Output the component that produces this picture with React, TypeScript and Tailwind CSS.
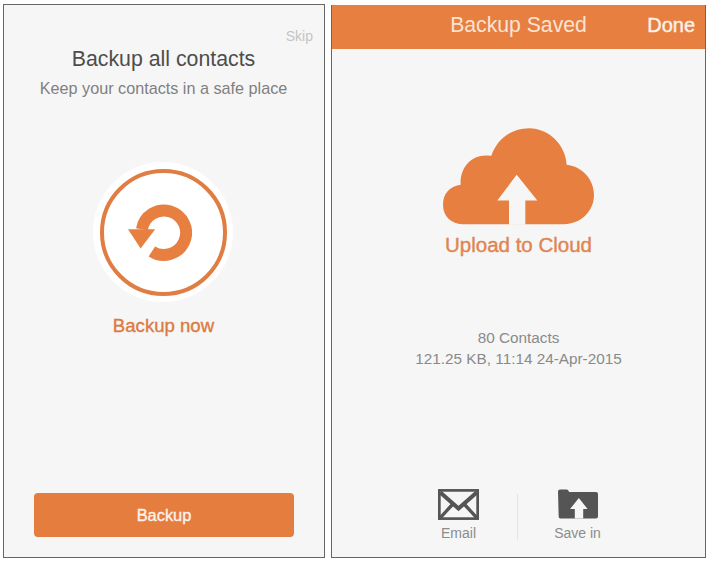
// App.tsx
import React from 'react';

const ORANGE = '#e77f41';

const ReloadIcon: React.FC = () => (
  <svg width="64" height="57" viewBox="175 165 193 170" className="mr-[6px]">
    <path d="M247 307A67 67 0 1 0 217 240" fill="none" stroke={ORANGE} strokeWidth="36" />
    <path d="M175 240H257L213 298Z" fill={ORANGE} />
  </svg>
);

const CloudIcon: React.FC = () => (
  <svg width="151" height="97" viewBox="72 55 453 290">
    <path
      d="M130 343C95 343 72 318 72 285C72 250 95 228 125 225C122 175 155 137 200 137C205 137 212 137 217 138C232 90 275 55 330 55C390 55 440 105 443 165C490 170 525 210 525 255C525 305 485 343 435 343Z"
      fill={ORANGE}
    />
    <path d="M293 195L235 272H270V345H319V272H355Z" fill="#f6f6f6" />
  </svg>
);

const MailIcon: React.FC = () => (
  <svg width="41" height="31" viewBox="55 30 122 92" fill="none" stroke="#555555">
    <rect x="59" y="34" width="114" height="84" strokeWidth="8" />
    <path d="M62 40L116 88L170 40" strokeWidth="12" />
    <path d="M62 115L98 76M170 115L134 76" strokeWidth="10" />
  </svg>
);

const FolderIcon: React.FC = () => (
  <svg width="40" height="30" viewBox="413 29 119 88">
    <path
      d="M413 36Q413 30 419 30H438Q444 30 446 37H526Q532 37 532 43V110Q532 116 526 116H420Q415 116 415 110Z"
      fill="#555555"
    />
    <path d="M475 55L449 88H463V116H488V88H501Z" fill="#f6f6f6" />
  </svg>
);

export default function App() {
  return (
    <div className="flex h-[563px] w-[710px] gap-[6px] bg-white pl-[3px] pt-[4px] font-['Liberation_Sans',Arial,sans-serif]">
      {/* 왼쪽 화면 */}
      <div className="flex h-[554px] w-[322px] flex-col items-center border border-[#666666] bg-[#f6f6f6]">
        <div className="mt-[22px] w-full pr-[11px] text-right text-[14px] leading-[18px] text-[#c4c4c4]">
          Skip
        </div>
        <h1 className="mt-[1px] mr-[1px] text-[21.3px] leading-[26px] text-[#4d4d4d]">
          Backup all contacts
        </h1>
        <p className="mt-[6px] mr-[1px] text-[16.2px] leading-[20px] text-[#808080]">
          Keep your contacts in a safe place
        </p>
        <div className="mt-[64px] mr-[2px] flex h-[140px] w-[140px] items-center justify-center rounded-full bg-white">
          <div className="flex h-[127px] w-[127px] items-center justify-center rounded-full border-[4px] border-[#e07d42]">
            <ReloadIcon />
          </div>
        </div>
        <div className="mt-[13px] mr-[1px] text-[18.6px] leading-[22px] text-[#dc7a40] [-webkit-text-stroke:0.35px_#dc7a40]">
          Backup now
        </div>
        <button
          type="button"
          className="mt-auto mb-[20px] h-[44px] w-[260px] rounded-[4px] bg-[#e57d3f] text-[16.4px] text-[#fdf3ea] [-webkit-text-stroke:0.35px_#fdf3ea]"
        >
          Backup
        </button>
      </div>

      {/* 오른쪽 화면 */}
      <div className="mt-[1px] flex h-[553px] w-[375px] flex-col items-center border border-t-0 border-[#666666] bg-[#f6f6f6]">
        <div className="relative flex h-[44px] w-full items-center justify-center bg-[#e77f41] pb-[5px]">
          <span className="text-[21.2px] leading-[26px] text-[#fbe3d2]">Backup Saved</span>
          <span className="absolute right-[10px] text-[20px] leading-[26px] text-[#fdf1e8] [-webkit-text-stroke:0.4px_#fdf1e8]">
            Done
          </span>
        </div>
        <div className="mt-[79px]">
          <CloudIcon />
        </div>
        <div className="mt-[8px] text-[20.5px] leading-[24px] text-[#df8550] [-webkit-text-stroke:0.4px_#df8550]">
          Upload to Cloud
        </div>
        <div className="mt-[70px] text-center text-[15.3px] leading-[21px] text-[#8a8a8a]">
          <div>80 Contacts</div>
          <div>121.25 KB, 11:14 24-Apr-2015</div>
        </div>
        <div className="mt-auto mb-[15px] flex items-start">
          <div className="flex w-[117px] flex-col items-center">
            <MailIcon />
            <span className="mt-[4px] text-[14px] leading-[18px] text-[#8c8c8c]">Email</span>
          </div>
          <div className="mt-[5px] h-[46px] w-px bg-[#e4e4e4]" />
          <div className="flex w-[119px] flex-col items-center">
            <FolderIcon />
            <span className="mt-[5px] text-[14px] leading-[18px] text-[#8c8c8c]">Save in</span>
          </div>
        </div>
      </div>
    </div>
  );
}
